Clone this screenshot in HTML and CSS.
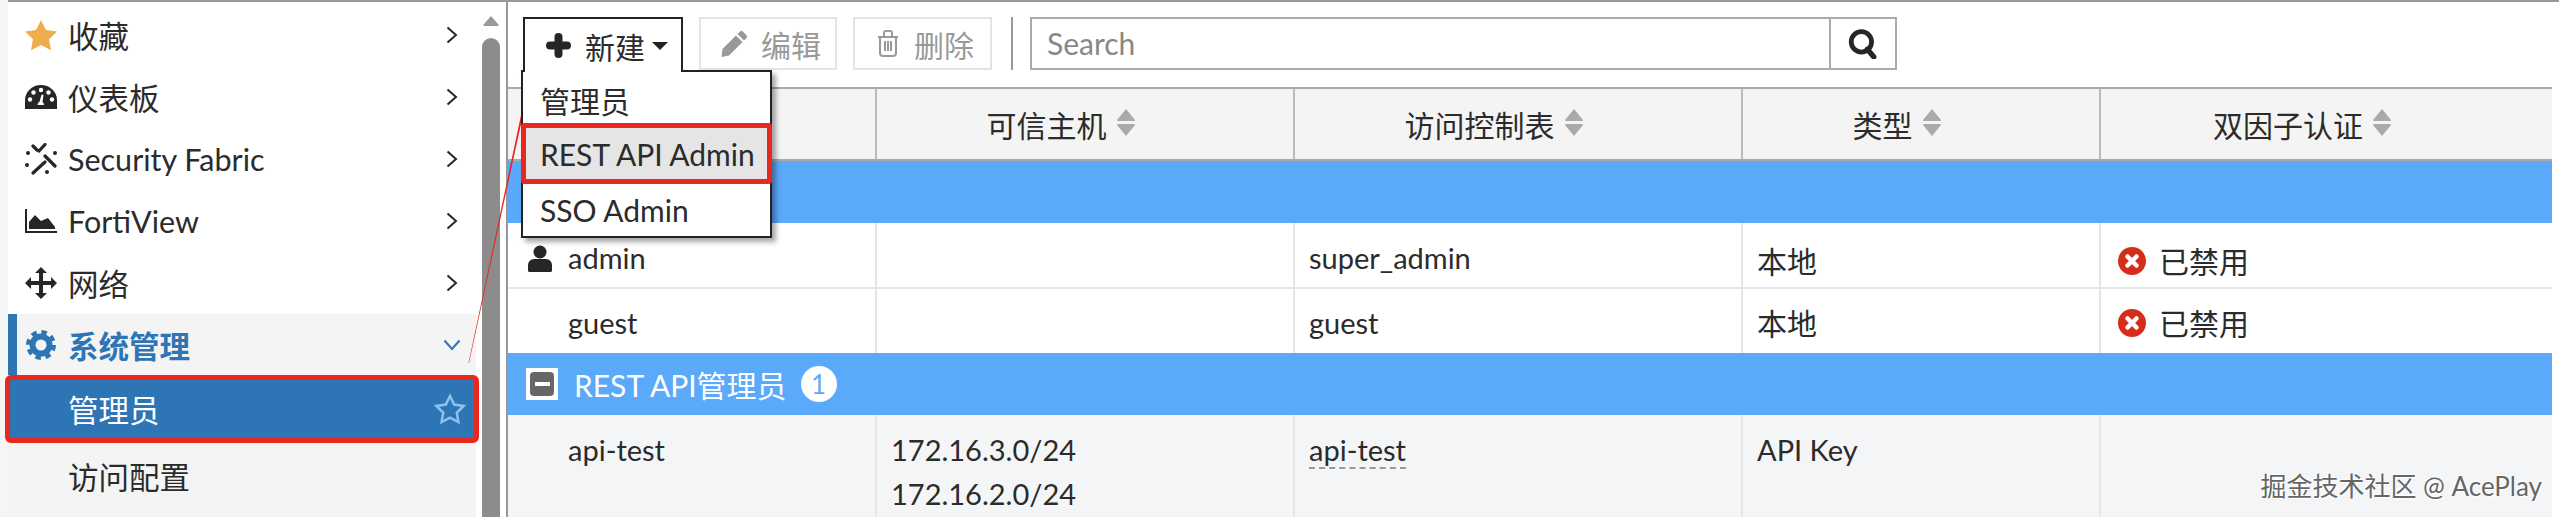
FILE: index.html
```html
<!DOCTYPE html>
<html lang="en">
  <head>
    <meta charset="UTF-8" />
    <title>管理员</title>
    <link rel="stylesheet" href="styles.css">
  </head>
  <body>
    <div class="page">
      <nav class="sidebar">
        <a class="nav-item">
          <svg class="nav-icon" viewBox="0 0 32 32"><path fill="#f0ad4e" d="M16 1l5 10 11 1.6-8 7.7 2 11-10-5.300-10 5.300 2-11-8-7.700 11-1.600z"/></svg>
          <span class="nav-label">收藏</span>
          <svg class="chev" viewBox="0 0 12 18"><path d="M1.500 1.500L10 9l-8.500 7.500"/></svg>
        </a>
        <a class="nav-item">
          <svg class="nav-icon" viewBox="0 0 32 32"><path fill="#262626" d="M0 28v-9a16 15 0 0 1 32 0v9z"/><g fill="#fff"><circle cx="16" cy="9" r="2.200"/><circle cx="8.500" cy="11.500" r="2.200"/><circle cx="23.500" cy="11.500" r="2.200"/><circle cx="5" cy="18.500" r="2.200"/><circle cx="27" cy="18.500" r="2.200"/><path d="M12.500 24a3.500 3.500 0 0 1 2-3.200l2-7h2l-1 7.200a3.500 3.500 0 0 1 1.500 3z"/></g></svg>
          <span class="nav-label">仪表板</span>
          <svg class="chev" viewBox="0 0 12 18"><path d="M1.500 1.500L10 9l-8.500 7.500"/></svg>
        </a>
        <a class="nav-item">
          <svg class="nav-icon" viewBox="0 0 32 32"><g stroke="#262626" stroke-width="3.200" stroke-linecap="round" fill="none"><path d="M14 8l6-6.500M8 3l4 4M20 13l10 10M8 30l12-11"/></g><g fill="#262626"><circle cx="3" cy="10" r="2"/><circle cx="30" cy="10" r="2"/><circle cx="2" cy="22" r="2"/><circle cx="22" cy="29" r="2"/></g></svg>
          <span class="nav-label">Security Fabric</span>
          <svg class="chev" viewBox="0 0 12 18"><path d="M1.500 1.500L10 9l-8.500 7.500"/></svg>
        </a>
        <a class="nav-item">
          <svg class="nav-icon" viewBox="0 0 32 24"><path fill="none" stroke="#262626" stroke-width="2" d="M1 0v23h31"/><path fill="#262626" d="M4 20v-7l6-7 6 6 7-3 7 9v2z"/></svg>
          <span class="nav-label">FortiView</span>
          <svg class="chev" viewBox="0 0 12 18"><path d="M1.500 1.500L10 9l-8.500 7.500"/></svg>
        </a>
        <a class="nav-item">
          <svg class="nav-icon" viewBox="0 0 32 32"><path fill="#262626" d="M16 0l6 6h-4v8h8v-4l6 6-6 6v-4h-8v8h4l-6 6-6-6h4v-8H6v4l-6-6 6-6v4h8V6h-4z"/></svg>
          <span class="nav-label">网络</span>
          <svg class="chev" viewBox="0 0 12 18"><path d="M1.500 1.500L10 9l-8.500 7.500"/></svg>
        </a>
        <a class="nav-item nav-open">
          <svg class="nav-icon" viewBox="0 0 32 32"><circle cx="16" cy="16" r="8.500" fill="none" stroke="#2e75b6" stroke-width="6"/><circle cx="16" cy="16" r="12.500" fill="none" stroke="#2e75b6" stroke-width="5" stroke-dasharray="5.300 4.520"/></svg>
          <span class="nav-label">系统管理</span>
          <svg class="chev chev-down" viewBox="0 0 18 12"><path d="M1.500 1.500L9 10l7.500-8.500"/></svg>
        </a>
        <a class="nav-item nav-active">
          <span class="nav-label">管理员</span>
          <svg class="star-outline" viewBox="0 0 32 32"><path d="M16 3l4.200 8.600 9.400 1.400-6.800 6.600 1.600 9.400-8.400-4.400-8.400 4.400 1.600-9.400L2.400 13l9.400-1.400z"/></svg>
        </a>
        <a class="nav-item nav-sub">
          <span class="nav-label">访问配置</span>
        </a>
      </nav>

      <div class="scroll">
        <svg class="scroll-up" viewBox="0 0 16 11"><path d="M8 1l7 8a1 1 0 0 1-1 2H2a1 1 0 0 1-1-2z"/></svg>
        <div class="scroll-thumb"></div>
      </div>

      <main class="main">
        <div class="toolbar">
          <button class="btn btn-new">
            <svg class="btn-plus" viewBox="0 0 25 25"><path d="M12.500 4v17M4 12.500h17"/></svg>
            <span>新建</span>
            <span class="caret"></span>
          </button>
          <button class="btn btn-off btn-edit">
            <svg class="btn-icon" viewBox="0 0 28 28"><path fill="#999" d="M20 1.500a2 2 0 0 1 2.800 0l3.700 3.700a2 2 0 0 1 0 2.800l-2.500 2.500-6.500-6.500zM16 5.500l6.500 6.500L9 25.500l-7.500 1.500 1-8z"/></svg>
            <span>编辑</span>
          </button>
          <button class="btn btn-off btn-del">
            <svg class="btn-trash" viewBox="0 0 22 27"><path fill="none" stroke="#999" stroke-width="2" d="M3 8v15a3 3 0 0 0 3 3h10a3 3 0 0 0 3-3V8M1 7h20M7 6V3a2 2 0 0 1 2-2h4a2 2 0 0 1 2 2v3M8 11v10M11 11v10M14 11v10"/></svg>
            <span>删除</span>
          </button>
          <div class="sep"></div>
          <div class="search">
            <div class="search-text">Search</div>
            <div class="search-btn">
              <svg viewBox="0 0 28 28"><circle cx="12.500" cy="12" r="9.500" fill="none" stroke="#262626" stroke-width="4.500"/><path d="M18 19l6 7" stroke="#262626" stroke-width="5" stroke-linecap="round"/></svg>
            </div>
          </div>
        </div>

        <div class="menu">
          <div class="menu-item">管理员</div>
          <div class="menu-item menu-picked">REST API Admin</div>
          <div class="menu-item menu-last">SSO Admin</div>
        </div>

        <div class="tr thead">
          <div class="th"></div>
          <div class="th"><span>可信主机</span><svg class="sort" viewBox="0 0 20 27"><path d="M10 0l9 11a1 1 0 0 1-1 1H2a1 1 0 0 1-1-1zM10 27l9-11a1 1 0 0 0-1-1H2a1 1 0 0 0-1 1z"/></svg></div>
          <div class="th"><span>访问控制表</span><svg class="sort" viewBox="0 0 20 27"><path d="M10 0l9 11a1 1 0 0 1-1 1H2a1 1 0 0 1-1-1zM10 27l9-11a1 1 0 0 0-1-1H2a1 1 0 0 0-1 1z"/></svg></div>
          <div class="th"><span>类型</span><svg class="sort" viewBox="0 0 20 27"><path d="M10 0l9 11a1 1 0 0 1-1 1H2a1 1 0 0 1-1-1zM10 27l9-11a1 1 0 0 0-1-1H2a1 1 0 0 0-1 1z"/></svg></div>
          <div class="th"><span>双因子认证</span><svg class="sort" viewBox="0 0 20 27"><path d="M10 0l9 11a1 1 0 0 1-1 1H2a1 1 0 0 1-1-1zM10 27l9-11a1 1 0 0 0-1-1H2a1 1 0 0 0-1 1z"/></svg></div>
        </div>

        <div class="group"></div>

        <div class="tr row row-admin">
          <div class="td td-user">
            <svg class="user" viewBox="0 0 24 27"><circle cx="12" cy="7" r="6.500" fill="#262626"/><path fill="#262626" d="M1 27a2 2 0 0 1-1-2v-5a6 6 0 0 1 6-6h12a6 6 0 0 1 6 6v5a2 2 0 0 1-1 2z"/></svg>
            <span>admin</span>
          </div>
          <div class="td"></div>
          <div class="td">super_admin</div>
          <div class="td td-cn">本地</div>
          <div class="td td-cn td-status">
            <svg class="off" viewBox="0 0 28 28"><circle cx="14" cy="14" r="14" fill="#d62c1a"/><path d="M9.500 9.500l9 9M18.500 9.500l-9 9" stroke="#fff" stroke-width="4.500" stroke-linecap="round"/></svg>
            <span>已禁用</span>
          </div>
        </div>
        <div class="tr row row-guest">
          <div class="td td-name">guest</div>
          <div class="td"></div>
          <div class="td">guest</div>
          <div class="td td-cn">本地</div>
          <div class="td td-cn td-status">
            <svg class="off" viewBox="0 0 28 28"><circle cx="14" cy="14" r="14" fill="#d62c1a"/><path d="M9.500 9.500l9 9M18.500 9.500l-9 9" stroke="#fff" stroke-width="4.500" stroke-linecap="round"/></svg>
            <span>已禁用</span>
          </div>
        </div>

        <div class="group group-open">
          <div class="toggle"><span class="toggle-box"><span class="toggle-minus"></span></span></div>
          <span class="group-title">REST API管理员</span>
          <span class="badge">1</span>
        </div>

        <div class="tr row row-api">
          <div class="td td-name">api-test</div>
          <div class="td">172.16.3.0/24<br>172.16.2.0/24</div>
          <div class="td"><span class="dashed">api-test</span></div>
          <div class="td">API Key</div>
          <div class="td"></div>
        </div>
      </main>
    </div>

    <div class="watermark">掘金技术社区 @ AcePlay</div>

    <svg class="arrow" viewBox="0 0 2559 517"><path d="M469 363L534.500 62l6.500 1-4-16-9.500 13 5 1L468.500 363z"/></svg>
  </body>
</html>
```

FILE: styles.css
```css
* {
  margin: 0;
  padding: 0;
  box-sizing: border-box;
}

html, body {
  height: 517px;
  overflow: hidden;
}

body {
  position: relative;
  background: #f5f5f5;
  font-family: Lato, "Noto Sans CJK SC", sans-serif;
  font-size: 29px;
  color: #2b2b2b;
}

.page {
  display: flex;
  height: 517px;
  margin-left: 8px;
  background: #fff;
  border-top: 2px solid #999;
}

.sidebar {
  width: 468px;
  padding-top: 2px;
  background: linear-gradient(#fff 312px, #f4f4f4 312px);
}

.nav-item {
  display: flex;
  align-items: center;
  height: 62px;
  padding: 0 18px 0 17px;
}

.nav-icon {
  width: 32px;
  height: 32px;
  flex: none;
  margin-right: 11px;
}

.nav-label {
  flex: 1;
  font-size: 30.500px;
  white-space: nowrap;
}

.chev {
  width: 12px;
  height: 18px;
  fill: none;
  stroke: #262626;
  stroke-width: 2;
}

.chev-down {
  width: 18px;
  height: 12px;
  stroke: #2e75b6;
  margin-right: -3px;
}

.nav-open {
  height: 61px;
  border-left: 9px solid #2e75b6;
  padding-left: 8px;
  color: #2e75b6;
}

.nav-open .nav-label {
  font-weight: 700;
}

.nav-active {
  height: 68px;
  margin: 0 -3px;
  padding: 0 0 0 58px;
  background: #2e75b6;
  border: 5px solid #e8281e;
  border-radius: 6px;
  color: #fff;
}

.star-outline {
  width: 32px;
  height: 32px;
  margin-right: 8px;
  fill: none;
  stroke: #8fc1ee;
  stroke-width: 2.500;
}

.nav-sub {
  height: 65px;
  padding-left: 60px;
}

.scroll {
  width: 30px;
  padding: 13px 6px 0;
}

.scroll-up {
  display: block;
  width: 16px;
  height: 11px;
  margin: 0 auto 12px;
  fill: #999;
}

.scroll-thumb {
  height: 480px;
  background: #8c8c8c;
  border-radius: 9px 9px 0 0;
}

.main {
  position: relative;
  width: 2046px;
  border-left: 2px solid #999;
}

.toolbar {
  display: flex;
  height: 85px;
  padding: 15px 0 0 15px;
}

.btn {
  display: flex;
  align-items: center;
  height: 53px;
  border: 2px solid #e4e4e4;
  background: #fff;
  font-family: inherit;
  font-size: 30px;
  white-space: nowrap;
}

.btn-new {
  position: relative;
  z-index: 3;
  width: 160px;
  height: 55px;
  margin-right: 16px;
  padding-left: 21px;
  border-color: #222;
  border-bottom: 0;
  color: #2b2b2b;
}

.btn-plus {
  width: 25px;
  height: 25px;
  margin-right: 14px;
  fill: none;
  stroke: #262626;
  stroke-width: 8;
  stroke-linecap: round;
}

.caret {
  width: 0;
  height: 0;
  margin-left: 7px;
  border: 8px solid transparent;
  border-top-color: #222;
  border-bottom: 0;
}

.btn-off {
  color: #999;
}

.btn-edit {
  width: 138px;
  margin-right: 16px;
  padding-left: 19px;
}

.btn-icon {
  width: 28px;
  height: 28px;
  margin-right: 13px;
}

.btn-del {
  width: 139px;
  padding-left: 22px;
}

.btn-trash {
  width: 22px;
  height: 27px;
  margin-right: 15px;
}

.sep {
  width: 2px;
  height: 53px;
  margin: 0 17px 0 19px;
  background: #999;
}

.search {
  display: flex;
  width: 867px;
  height: 53px;
  border: 2px solid #aaa;
}

.search-text {
  flex: 1;
  padding-left: 15px;
  font-size: 30px;
  line-height: 49px;
  color: #888;
}

.search-btn {
  display: flex;
  align-items: center;
  justify-content: center;
  width: 66px;
  border-left: 2px solid #aaa;
}

.search-btn svg {
  width: 30px;
  height: 30px;
}

.menu {
  position: absolute;
  z-index: 2;
  left: 13px;
  top: 68px;
  width: 251px;
  height: 168px;
  background: #fff;
  border: 2px solid #222;
  box-shadow: 4px 4px 5px rgba(0, 0, 0, .35);
  font-size: 30px;
}

.menu-item {
  height: 51px;
  padding-left: 17px;
  line-height: 59px;
  white-space: nowrap;
}

.menu-picked {
  height: 61px;
  margin: 0 -2px;
  padding-left: 14px;
  line-height: 53px;
  background: #e5e5e5;
  border: 5px solid #e8281e;
  border-radius: 3px;
}

.menu-last {
  line-height: 52px;
}

.tr {
  display: grid;
  grid-template-columns: 369px 418px 448px 358px 451px;
  width: 2044px;
}

.thead {
  height: 74px;
  background: #f4f4f4;
  border-top: 2px solid #aaa;
  border-bottom: 2px solid #aaa;
  font-size: 30px;
}

.th {
  display: flex;
  align-items: center;
  justify-content: center;
  gap: 9px;
  padding-right: 48px;
  border-right: 2px solid #bbb;
}

.th:last-child {
  border-right: 0;
}

.sort {
  width: 20px;
  height: 27px;
  fill: #aaa;
  margin-top: -4px;
}

.group {
  display: flex;
  align-items: center;
  width: 2044px;
  height: 62px;
  background: #5aa9fa;
  color: #fff;
  font-size: 30px;
}

.toggle {
  display: flex;
  align-items: center;
  justify-content: center;
  width: 32px;
  height: 32px;
  margin: 0 16px 0 18px;
  background: #fff;
}

.toggle-box {
  display: flex;
  align-items: center;
  justify-content: center;
  width: 24px;
  height: 24px;
  background: #666;
  border-radius: 4px;
}

.toggle-minus {
  width: 15px;
  height: 4px;
  background: #fff;
}

.group-title {
  margin-right: 14px;
}

.badge {
  width: 36px;
  height: 36px;
  background: #fff;
  border-radius: 50%;
  color: #5aa9fa;
  line-height: 36px;
  text-align: center;
  font-size: 26px;
}

.row {
  height: 66px;
  background: #fff;
  border-bottom: 2px solid #e6e6e6;
}

.row-guest {
  height: 64px;
  border-bottom: 0;
}

.row-api {
  height: 102px;
  background: #f4f5f7;
  border-bottom: 0;
}

.td {
  padding: 13px 14px 0;
  line-height: 44px;
  border-right: 2px solid #e6e6e6;
  white-space: nowrap;
}

.td:last-child {
  border-right: 0;
}

.td-cn {
  font-size: 30px;
}

.row-admin .td-cn {
  padding-top: 16px;
}

.row-guest .td {
  padding-top: 12px;
}

.td-user {
  display: flex;
  align-items: flex-start;
  padding-left: 20px;
}

.user {
  width: 24px;
  height: 27px;
  margin: 9px 16px 0 0;
}

.td.td-name {
  padding-left: 60px;
}

.td-status {
  display: flex;
  align-items: flex-start;
  padding-left: 17px;
}

.off {
  width: 28px;
  height: 28px;
  margin: 8px 13px 0 0;
}

.dashed {
  border-bottom: 2px dashed #999;
}

.watermark {
  position: absolute;
  right: 17px;
  bottom: 14px;
  font-size: 26px;
  color: #666;
  text-shadow: 1px 1px 1px #fff, -1px -1px 1px #fff;
  white-space: nowrap;
}

.arrow {
  position: absolute;
  left: 0;
  top: 0;
  width: 2559px;
  height: 517px;
  fill: #e8281e;
}
```
